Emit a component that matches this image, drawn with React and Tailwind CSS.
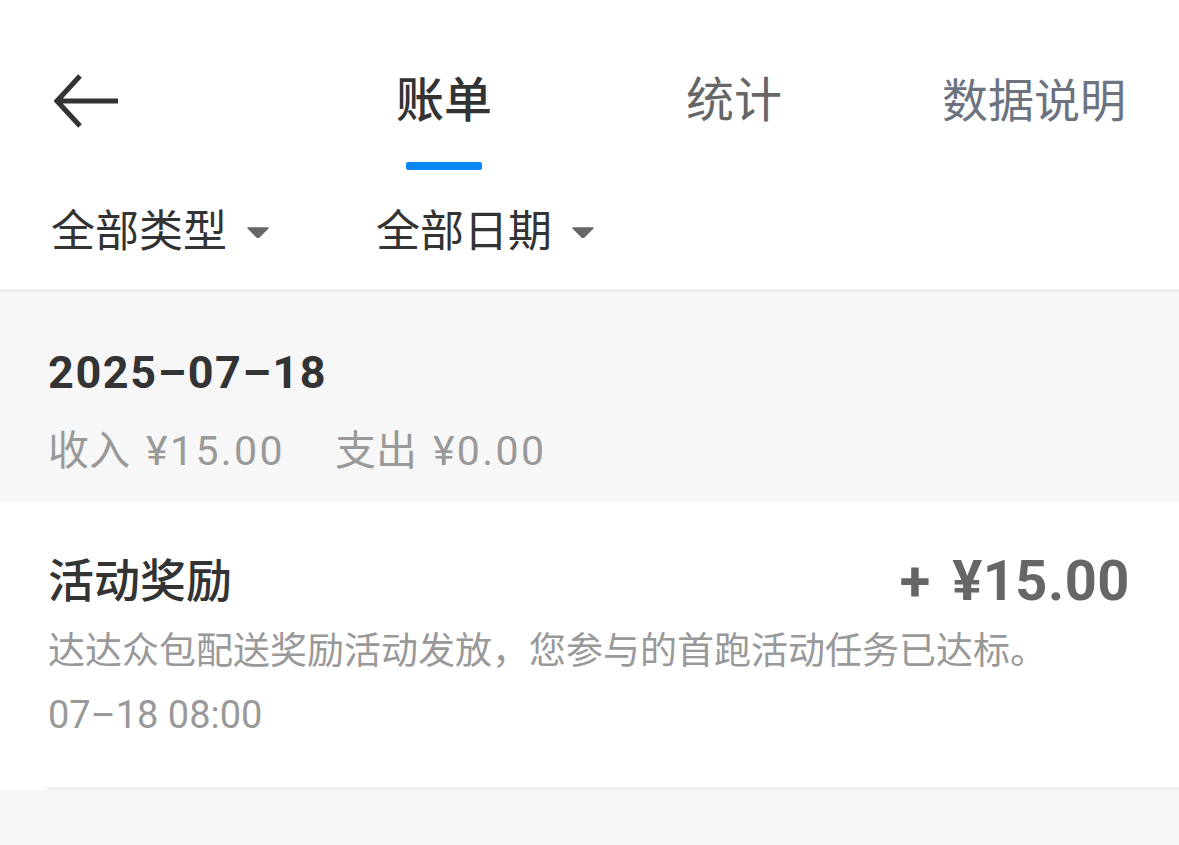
const font = "font-['Roboto','Noto_Sans_CJK_SC',sans-serif]"

function Caret() {
  return (
    <svg width="22" height="11" viewBox="0 0 22 11" className="ml-[20px]">
      <path d="M1 1h20l-10 10z" fill="#666" stroke="#666" strokeLinejoin="round" strokeWidth="1.5" />
    </svg>
  )
}

function Filter({ label }) {
  return (
    <div className="flex items-center">
      <span className="text-[44px] leading-[52px] text-[#333]">{label}</span>
      <Caret />
    </div>
  )
}

export default function App() {
  return (
    <div className={`${font} min-h-[845px] w-[1179px] bg-[#f7f7f7]`}>
      <div className="bg-white">
        {/* top tabs */}
        <div className="flex items-start pt-[73px]">
          <div className="ml-[54px] flex h-[56px] w-[66px] items-center">
            <svg width="66" height="56" viewBox="0 0 66 56">
              <path d="M26 3 3 28l23 25M3 28h61" fill="none" stroke="#333" strokeWidth="5" strokeLinecap="butt" strokeLinejoin="miter" />
            </svg>
          </div>
          <div className="ml-[276px] flex w-[96px] flex-col items-center">
            <span className="whitespace-nowrap text-[48px] leading-[56px] font-medium text-[#333]">账单</span>
            <div className="mt-[33px] h-[8px] w-[76px] rounded-[2px] bg-[#0a86f5]" />
          </div>
          <span className="ml-[194px] w-[98px] whitespace-nowrap text-[48px] leading-[56px] text-[#666]">统计</span>
          <span className="ml-[158px] whitespace-nowrap text-[46px] leading-[56px] text-[#6c737f]">数据说明</span>
        </div>

        {/* filters */}
        <div className="mt-[36px] flex h-[52px] items-center pl-[51px]">
          <Filter label="全部类型" />
          <div className="ml-[107px]">
            <Filter label="全部日期" />
          </div>
        </div>
        <div className="h-[31px]" />
        <div className="h-[3px] bg-[#ededed]" />
      </div>

      {/* day summary */}
      <div className="bg-[#f7f7f7] pb-[27px] pl-[48px] pt-[57px]">
        <div className="text-[45px] leading-[48px] font-bold tracking-[1.6px] text-[#333]">2025–07–18</div>
        <div className="mt-[30px] flex text-[41px] leading-[48px] text-[#999]">
          <span>
            收入<span className="ml-[16px] tracking-[2.4px]">¥15.00</span>
          </span>
          <span className="ml-[50px]">
            支出<span className="ml-[16px] tracking-[2.4px]">¥0.00</span>
          </span>
        </div>
      </div>

      {/* record */}
      <div className="bg-white">
        <div className="pb-[50px] pl-[48px] pr-[49px] pt-[51px]">
          <div className="flex items-center justify-between">
            <span className="text-[46px] leading-[56px] font-medium text-[#333]">活动奖励</span>
            <span className="flex items-center text-[56px] leading-[56px] font-bold text-[#666]">
              <span>+</span>
              <span className="ml-[22px] tracking-[0.5px]">¥15.00</span>
            </span>
          </div>
          <div className="mt-[19px] whitespace-nowrap text-[37px] leading-[48px] text-[#999]">
            达达众包配送奖励活动发放，您参与的首跑活动任务已达标。
          </div>
          <div className="mt-[17px] text-[38px] leading-[44px] text-[#999]">07–18 08:00</div>
        </div>
        <div className="ml-[47px] h-[3px] bg-[#efefef]" />
      </div>
    </div>
  )
}
